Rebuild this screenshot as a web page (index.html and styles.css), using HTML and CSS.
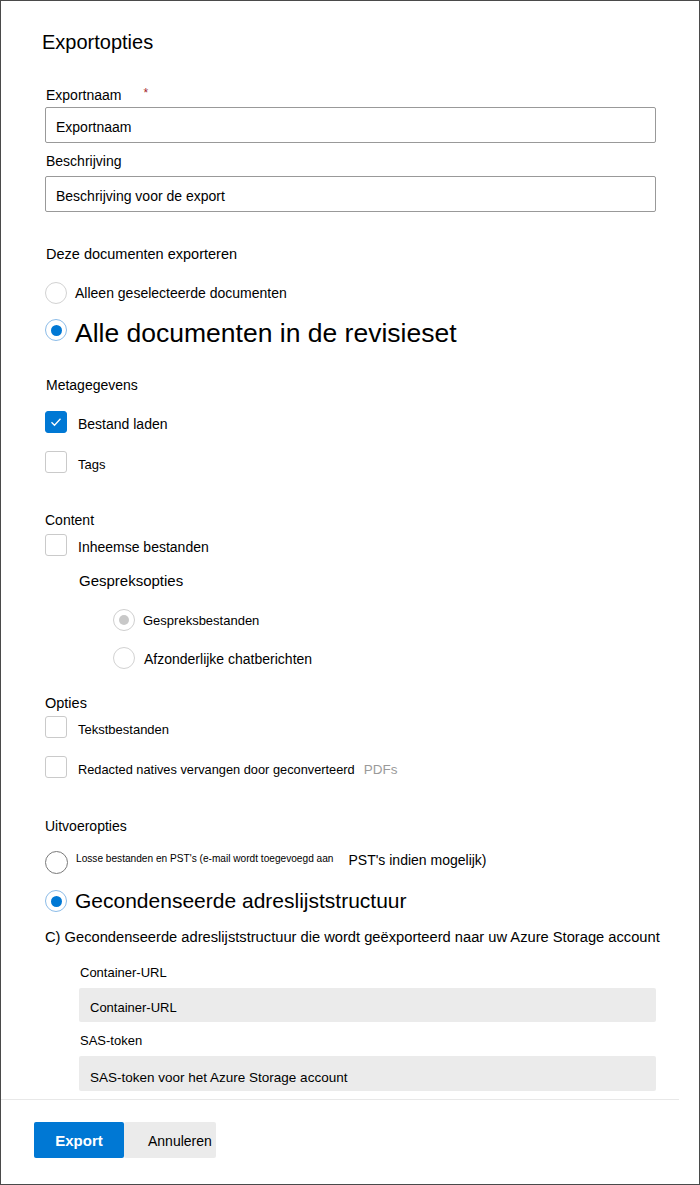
FILE: index.html
```html
<!DOCTYPE html>
<html lang="nl">
<head>
<meta charset="utf-8">
<title>Exportopties</title>
<link rel="stylesheet" href="styles.css">
</head>
<body>
<div class="panel">
  <div class="form">
    <h1 class="title">Exportopties</h1>

    <div class="label l-exportnaam">Exportnaam<span class="req">*</span></div>
    <div class="input in-1">Exportnaam</div>

    <div class="label l-beschrijving">Beschrijving</div>
    <div class="input in-2">Beschrijving voor de export</div>

    <div class="label l-deze">Deze documenten exporteren</div>
    <div class="row r-alleen"><span class="radio"></span><span class="t14">Alleen geselecteerde documenten</span></div>
    <div class="row r-alle"><span class="radio sel"></span><span class="big">Alle documenten in de revisieset</span></div>

    <div class="label l-meta">Metagegevens</div>
    <div class="row r-cb1"><span class="cb checked"><svg viewBox="0 0 22 22" width="22" height="22"><path d="M6.5 11.2l3 3 6-6.4" fill="none" stroke="#fff" stroke-width="1.3"/></svg></span><span class="t14 cbt">Bestand laden</span></div>
    <div class="row r-cb2"><span class="cb"></span><span class="t13 cbt">Tags</span></div>

    <div class="label l-content">Content</div>
    <div class="row r-inheems"><span class="cb"></span><span class="t14 cbt">Inheemse bestanden</span></div>
    <div class="label l-gesprek">Gespreksopties</div>
    <div class="row nested r-g1"><span class="radio gray"></span><span class="t13">Gespreksbestanden</span></div>
    <div class="row nested r-g2"><span class="radio"></span><span class="t14 g2t">Afzonderlijke chatberichten</span></div>

    <div class="label l-opties">Opties</div>
    <div class="row r-tekst"><span class="cb"></span><span class="t13 cbt">Tekstbestanden</span></div>
    <div class="row r-redacted"><span class="cb"></span><span class="t13 cbt redt">Redacted natives vervangen door geconverteerd</span><span class="pdfs cbt">PDFs</span></div>

    <div class="label l-uitvoer">Uitvoeropties</div>
    <div class="row r-losse"><span class="radio dark"></span><span class="tiny">Losse bestanden en PST's (e-mail wordt toegevoegd aan</span><span class="pst">PST's indien mogelijk)</span></div>
    <div class="row r-gecond"><span class="radio sel"></span><span class="mid">Gecondenseerde adreslijststructuur</span></div>
    <div class="label l-c">C) Gecondenseerde adreslijststructuur die wordt geëxporteerd naar uw Azure Storage account</div>

    <div class="sub">
      <div class="label l-container">Container-URL</div>
      <div class="ginput gi-1">Container-URL</div>
      <div class="label l-sas">SAS-token</div>
      <div class="ginput gi-2">SAS-token voor het Azure Storage account</div>
    </div>
  </div>

  <div class="divider"></div>

  <div class="footer">
    <button class="btn primary">Export</button>
    <button class="btn secondary">Annuleren</button>
  </div>
</div>
</body>
</html>
```

FILE: styles.css
```css
* { box-sizing: border-box; }
html, body { margin: 0; padding: 0; background: #fff; }
body { font-family: "Liberation Sans", Arial, sans-serif; color: #000; }

.panel {
  width: 700px;
  height: 1185px;
  border: 1px solid #4a4a4a;
  overflow: hidden;
}

.form { padding-left: 44px; }

.title {
  margin: 29px 0 0 -3px;
  font-size: 20px;
  font-weight: normal;
  line-height: 24px;
  height: 24px;
}

.label {
  font-size: 14px;
  line-height: 18px;
  height: 18px;
  margin-left: 1px;
  white-space: nowrap;
}
.req { color: #a4262c; font-size: 12px; margin-left: 22px; position: relative; top: -3px; }

.input {
  width: 611px;
  height: 36px;
  border: 1px solid #999;
  border-radius: 2px;
  padding-left: 10px;
  font-size: 14px;
  line-height: 39px;
}

.l-exportnaam { margin-top: 32px; }
.in-1 { margin-top: 3px; }
.l-beschrijving { margin-top: 9px; }
.in-2 { margin-top: 6px; line-height: 38px; }
.l-deze { margin-top: 33px; font-size: 14.5px; }

.row {
  display: flex;
  align-items: center;
  height: 22px;
  white-space: nowrap;
}
.r-alleen { margin-top: 19px; }
.r-alle { margin-top: 15px; }
.l-meta { margin-top: 35px; }
.r-cb1 { margin-top: 17px; }
.r-cb2 { margin-top: 18px; }
.l-content { margin-top: 38px; margin-left: 0; }
.r-inheems { margin-top: 5px; }
.l-gesprek { margin-top: 16px; margin-left: 34px; font-size: 15px; }
.nested { padding-left: 68px; }
.r-g1 { margin-top: 19px; }
.r-g2 { margin-top: 16px; }
.g2t { margin-left: 1px; margin-top: 2px; }
.l-opties { margin-top: 25px; margin-left: 0; font-size: 14.5px; }
.r-tekst { margin-top: 4px; }
.r-redacted { margin-top: 18px; }
.l-uitvoer { margin-top: 39px; margin-left: 0; }
.r-losse { margin-top: 16px; height: 23px; }
.r-gecond { margin-top: 16px; }
.l-c { margin-top: 16px; margin-left: 0; font-size: 14.7px; }

.radio {
  flex: none;
  width: 22px;
  height: 22px;
  border: 1px solid #d2d2d2;
  border-radius: 50%;
  margin-right: 8px;
  position: relative;
}
.radio.sel { border: 1.5px solid #8cbce8; }
.radio.sel::after {
  content: "";
  position: absolute;
  left: 50%; top: 50%;
  width: 11px; height: 11px;
  margin: -5.5px 0 0 -5.5px;
  border-radius: 50%;
  background: #0078d4;
}
.radio.gray { border-color: #cfcfcf; }
.radio.gray::after {
  content: "";
  position: absolute;
  left: 50%; top: 50%;
  width: 10px; height: 10px;
  margin: -5px 0 0 -5px;
  border-radius: 50%;
  background: #c8c8c8;
}
.radio.dark { width: 23px; height: 23px; border-color: #7a7a7a; }

.cb {
  flex: none;
  width: 22px;
  height: 22px;
  border: 1px solid #cacaca;
  border-radius: 3px;
  margin-right: 11px;
  display: flex;
}
.cb.checked { background: #0078d4; border-color: #0078d4; }
.cb.checked svg { margin: -1px; }
.cbt { margin-top: 4px; }

.t14 { font-size: 14px; }
.t13 { font-size: 13px; }
.redt { font-size: 12.8px; }
.big { font-size: 26.5px; margin-top: 6px; }
.mid { font-size: 21px; }
.pdfs { font-size: 13.5px; color: #9a9a9a; margin-left: 9px; }
.tiny { font-size: 10.15px; position: relative; top: -4px; }
.pst { font-size: 14px; margin-left: 15px; position: relative; top: -3px; }

.sub { padding-left: 34px; }
.sub .label { font-size: 13px; margin-left: 1px; }
.l-container { margin-top: 18px; }
.l-sas { margin-top: 10px; }
.ginput {
  width: 577px;
  background: #ebebeb;
  border-radius: 2px;
  padding-left: 11px;
  font-size: 13.5px;
}
.gi-1 { margin-top: 6px; height: 34px; line-height: 40px; font-size: 13px; }
.gi-2 { margin-top: 6px; height: 35px; line-height: 44px; }

.divider {
  margin-top: 8px;
  width: 678px;
  height: 1px;
  background: #e8e8e8;
}

.footer {
  margin-top: 22px;
  padding-left: 33px;
  display: flex;
}
.btn {
  height: 36px;
  border: none;
  border-radius: 2px;
  font-family: "Liberation Sans", Arial, sans-serif;
  padding: 0;
}
.primary {
  width: 90px;
  background: #0078d4;
  color: #fff;
  font-weight: bold;
  font-size: 15px;
  padding-top: 1px;
}
.secondary {
  width: 92px;
  background: #ebebeb;
  color: #000;
  font-size: 14px;
  text-align: left;
  padding-left: 24px;
  padding-top: 2px;
}
```
